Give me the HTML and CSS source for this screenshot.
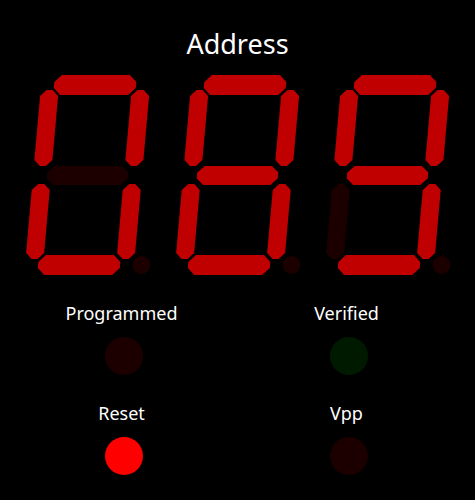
FILE: index.html
```html
<!DOCTYPE html>
<html lang="en">
<head>
    <meta charset="UTF-8">
    <title>Programmer status</title>
    <link rel="stylesheet" href="styles.css">
</head>
<body>
    <div class="panel">
        <h1 class="title">Address</h1>

        <div class="digits">
            <!-- digit 0 -->
            <svg class="digit" viewBox="0 0 135 210" width="135" height="210">
                <g transform="translate(17.4 0) skewX(-5.08)">
                    <polygon class="seg on"  points="18,12 25,5 93,5 100,12 100,18 93,25 25,25 18,18"/>
                    <polygon class="seg on"  points="102,20 108,20 114,26 114,90 108,96 102,96 96,90 96,26"/>
                    <polygon class="seg on"  points="102,114 108,114 114,120 114,183 108,189 102,189 96,183 96,120"/>
                    <polygon class="seg on"  points="18,192 25,185 93,185 100,192 100,198 93,205 25,205 18,198"/>
                    <polygon class="seg on"  points="11,114 17,114 23,120 23,183 17,189 11,189 5,183 5,120"/>
                    <polygon class="seg on"  points="11,20 17,20 23,26 23,90 17,96 11,96 5,90 5,26"/>
                    <polygon class="seg off" points="19,102.5 26,96 93,96 100,102.5 100,108.5 93,115 26,115 19,108.5"/>
                </g>
                <circle class="seg off" cx="121.5" cy="195" r="9"/>
            </svg>

            <!-- digit 8 -->
            <svg class="digit" viewBox="0 0 135 210" width="135" height="210">
                <g transform="translate(17.4 0) skewX(-5.08)">
                    <polygon class="seg on" points="18,12 25,5 93,5 100,12 100,18 93,25 25,25 18,18"/>
                    <polygon class="seg on" points="102,20 108,20 114,26 114,90 108,96 102,96 96,90 96,26"/>
                    <polygon class="seg on" points="102,114 108,114 114,120 114,183 108,189 102,189 96,183 96,120"/>
                    <polygon class="seg on" points="18,192 25,185 93,185 100,192 100,198 93,205 25,205 18,198"/>
                    <polygon class="seg on" points="11,114 17,114 23,120 23,183 17,189 11,189 5,183 5,120"/>
                    <polygon class="seg on" points="11,20 17,20 23,26 23,90 17,96 11,96 5,90 5,26"/>
                    <polygon class="seg on" points="19,102.5 26,96 93,96 100,102.5 100,108.5 93,115 26,115 19,108.5"/>
                </g>
                <circle class="seg off" cx="121.5" cy="195" r="9"/>
            </svg>

            <!-- digit 9 -->
            <svg class="digit" viewBox="0 0 135 210" width="135" height="210">
                <g transform="translate(17.4 0) skewX(-5.08)">
                    <polygon class="seg on"  points="18,12 25,5 93,5 100,12 100,18 93,25 25,25 18,18"/>
                    <polygon class="seg on"  points="102,20 108,20 114,26 114,90 108,96 102,96 96,90 96,26"/>
                    <polygon class="seg on"  points="102,114 108,114 114,120 114,183 108,189 102,189 96,183 96,120"/>
                    <polygon class="seg on"  points="18,192 25,185 93,185 100,192 100,198 93,205 25,205 18,198"/>
                    <polygon class="seg off" points="11,114 17,114 23,120 23,183 17,189 11,189 5,183 5,120"/>
                    <polygon class="seg on"  points="11,20 17,20 23,26 23,90 17,96 11,96 5,90 5,26"/>
                    <polygon class="seg on"  points="19,102.5 26,96 93,96 100,102.5 100,108.5 93,115 26,115 19,108.5"/>
                </g>
                <circle class="seg off" cx="121.5" cy="195" r="9"/>
            </svg>
        </div>

        <div class="leds">
            <div class="led-item">
                <span class="led-label">Programmed</span>
                <span class="led red-off"></span>
            </div>
            <div class="led-item">
                <span class="led-label">Verified</span>
                <span class="led green-off"></span>
            </div>
            <div class="led-item">
                <span class="led-label">Reset</span>
                <span class="led red-on"></span>
            </div>
            <div class="led-item">
                <span class="led-label">Vpp</span>
                <span class="led red-off"></span>
            </div>
        </div>
    </div>
</body>
</html>
```

FILE: styles.css
```css
* {
    margin: 0;
    padding: 0;
    box-sizing: border-box;
}

body {
    background: #000;
    color: #fff;
    font-family: 'Noto Sans', 'DejaVu Sans', sans-serif;
    width: 475px;
    height: 500px;
    overflow: hidden;
}

.title {
    padding-top: 28px;
    font-size: 27px;
    font-weight: normal;
    line-height: 32px;
    text-align: center;
}

/* seven segment row */
.digits {
    display: flex;
    justify-content: center;
    gap: 15px;
    margin-top: 10px;
}

.digit {
    display: block;
}

.seg.on {
    fill: #c00000;
}

.seg.off {
    fill: #1c0000;
}

/* status lamps */
.leds {
    display: grid;
    grid-template-columns: 225px 225px;
    row-gap: 26px;
    padding-left: 11px;
    margin-top: 21px;
}

.led-item {
    display: flex;
    flex-direction: column;
    align-items: center;
    gap: 12px;
}

.led-label {
    margin-right: 4px;
    font-size: 18px;
    line-height: 24px;
}

.led {
    width: 38px;
    height: 38px;
    border-radius: 50%;
}

.red-off {
    background: #1c0000;
}

.red-on {
    background: #ff0000;
}

.green-off {
    background: #001a00;
}
```
